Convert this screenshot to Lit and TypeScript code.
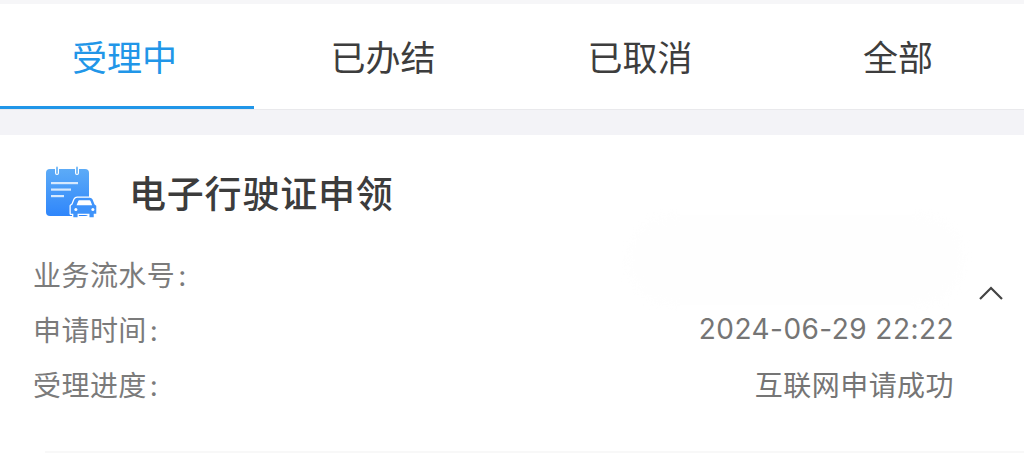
import { LitElement, html, css } from "lit";
import { customElement } from "lit/decorators.js";

const tabs = ["受理中", "已办结", "已取消", "全部"];
const rows = [
  ["业务流水号", ""],
  ["申请时间", "2024-06-29 22:22"],
  ["受理进度", "互联网申请成功"],
];

@customElement("app-root")
export class AppRoot extends LitElement {
  static styles = css`
    :host {
      display: block;
      width: 1024px;
      height: 461px;
      overflow: hidden;
      position: relative;
      background: #fff;
      font-family: "Noto Sans CJK SC", "Noto Sans", sans-serif;
    }
    .top { height: 4px; background: #f6f6f8; }
    .tabs {
      display: grid;
      grid-template-columns: 254px 258px 256px 256px;
      height: 105px;
      border-bottom: 1px solid #e9e9ec;
    }
    .tab {
      display: flex;
      align-items: center;
      justify-content: center;
      font-size: 35px;
      color: #3d3d3d;
      box-sizing: border-box;
      border-bottom: 3px solid transparent;
    }
    .tab.on { color: #2196e8; border-bottom-color: #2196e8; padding-right: 5px; }
    .tab.last { padding-left: 4px; }
    .gap { height: 25px; background: #f3f3f7; }
    .card { position: relative; padding: 28px 70px 0 33px; }
    .head { display: flex; align-items: center; gap: 32px; padding-left: 12px; height: 60px; }
    .head svg { display: block; width: 52px; height: 54px; }
    .title {
      font-size: 37px;
      font-weight: 500;
      color: #3c3c3c;
      letter-spacing: 0.8px;
      padding-bottom: 2px;
    }
    .rows { margin-top: 23px; }
    .row {
      display: flex;
      justify-content: space-between;
      align-items: center;
      height: 55px;
      font-family: Inter, "Noto Sans CJK SC", sans-serif;
      font-size: 28px;
      letter-spacing: 0.45px;
      color: #777;
    }
    .label { color: #7b7b7b; }
    .colon { margin-left: 3px; }
    .value { color: #757575; }
    .chev { position: absolute; left: 978px; top: 150px; width: 26px; height: 16px; }
    .smudge {
      position: absolute;
      left: 628px;
      top: 80px;
      width: 336px;
      height: 90px;
      border-radius: 45px;
      background: #fefefe;
      filter: blur(4px);
    }
    .rule {
      position: absolute;
      left: 45px;
      right: 0;
      top: 451px;
      height: 2px;
      background: #f8f8f8;
    }
  `;

  render() {
    return html`
      <div class="top"></div>
      <div class="tabs">
        ${tabs.map(
          (t, i) => html`<div class="tab ${i === 0 ? "on" : ""} ${i === 3 ? "last" : ""}">${t}</div>`
        )}
      </div>
      <div class="gap"></div>
      <div class="card">
        <div class="smudge"></div>
        <div class="head">
          <svg viewBox="0 0 52 54" aria-hidden="true">
            <defs>
              <linearGradient id="g" x1="0" y1="0" x2="0" y2="1">
                <stop offset="0" stop-color="#5cabf7" />
                <stop offset="1" stop-color="#2f86fb" />
              </linearGradient>
            </defs>
            <rect x="1" y="3" width="43" height="47" rx="4" fill="url(#g)" />
            <rect x="10" y="0" width="4" height="9" rx="2" fill="#fff" />
            <rect x="11" y="0.5" width="2" height="7.5" rx="1" fill="#7abcf8" />
            <rect x="30" y="0" width="4" height="9" rx="2" fill="#fff" />
            <rect x="31" y="0.5" width="2" height="7.500" rx="1" fill="#7abcf8" />
            <rect x="6" y="16" width="27" height="2.200" fill="#d6e9fe" />
            <rect x="6" y="22.500" width="20" height="2.200" fill="#d6e9fe" />
            <rect x="6" y="29" width="13" height="2.200" fill="#d6e9fe" />
            <g transform="translate(7.500 7) scale(.85)">
              <path
                fill="#3f93fa"
                stroke="#fff"
                stroke-width="3"
                stroke-linejoin="round"
                paint-order="stroke"
                d="M31 29h13q2 0 3 2l2.500 6 2 1.500v9.500h-3v4h-5v-4h-14v4h-5v-4h-3v-9.500l2-1.500 2.500-6q1-2 3-2z"
              />
              <path fill="#fff" d="M31.500 32h12q.8 0 1.200 1l2 5H28.300l2-5q.4-1 1.200-1z" />
              <circle cx="27.500" cy="43" r="1.800" fill="#fff" />
              <circle cx="47.500" cy="43" r="1.800" fill="#fff" />
            </g>
          </svg>
          <div class="title">电子行驶证申领</div>
        </div>
        <div class="rows">
          ${rows.map(
            ([l, v]) => html`<div class="row"><span class="label">${l}<span class="colon">:</span></span><span class="value">${v}</span></div>`
          )}
        </div>
        <svg class="chev" viewBox="0 0 26 16" aria-hidden="true">
          <path d="M2 14L13 3l11 11" fill="none" stroke="#444" stroke-width="2.200" />
        </svg>
      </div>
      <div class="rule"></div>
    `;
  }
}
